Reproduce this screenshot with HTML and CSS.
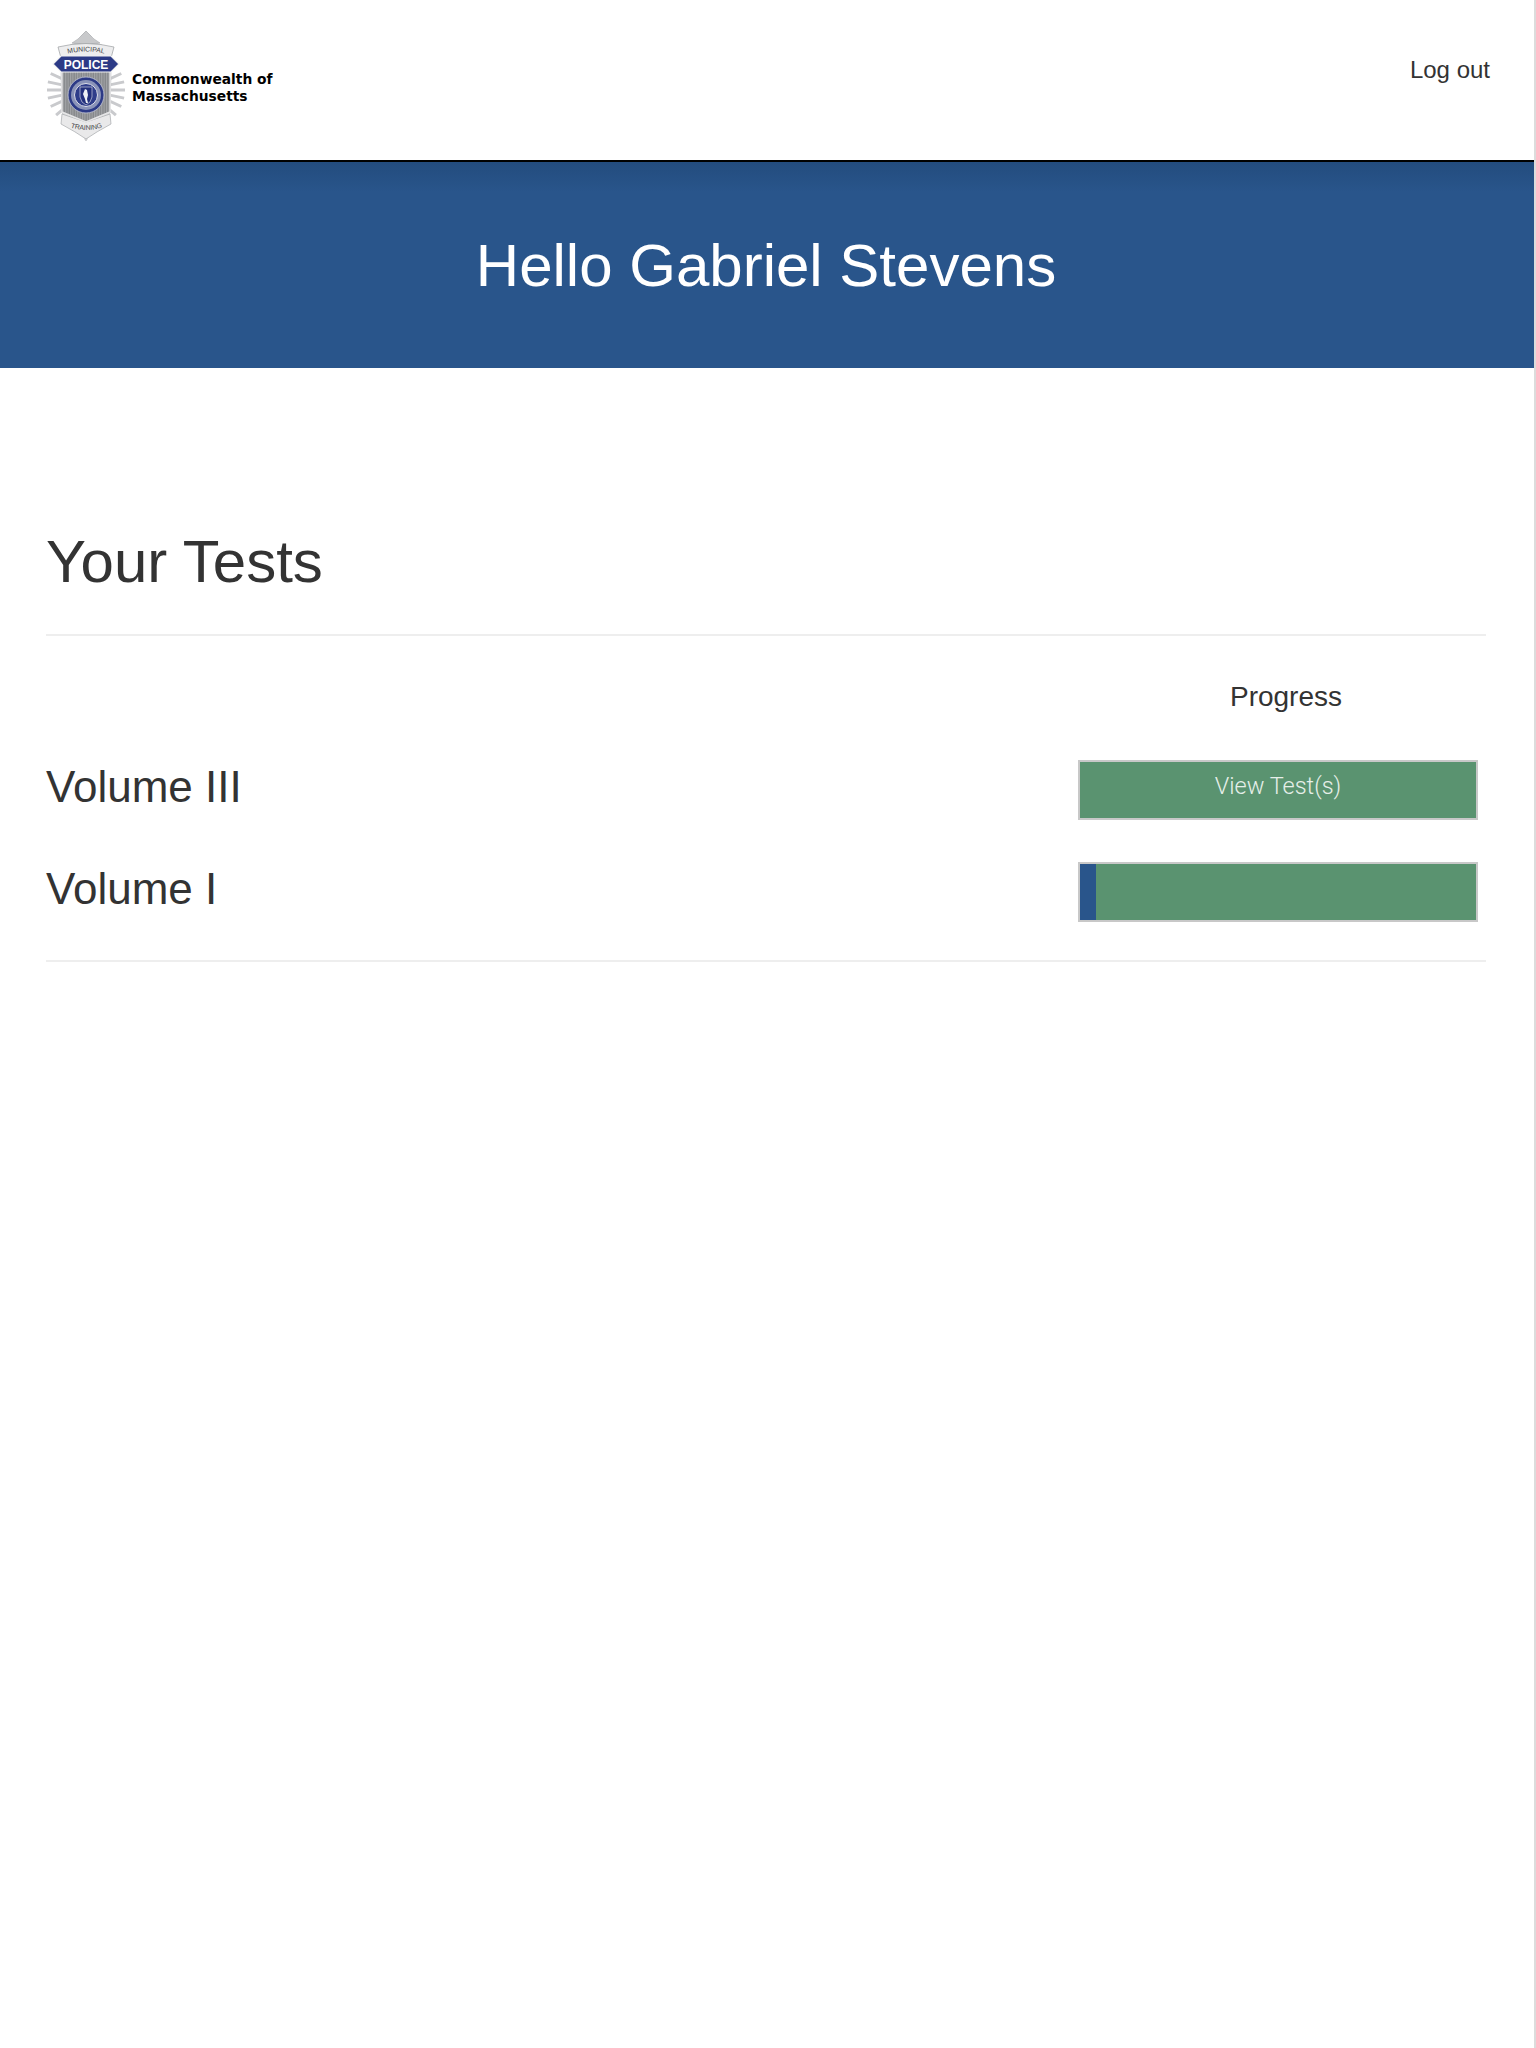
FILE: index.html
```html
<!DOCTYPE html>
<html lang="en">
<head>
  <meta charset="UTF-8" />
  <meta name="viewport" content="width=device-width, initial-scale=1.0" />
  <title>Your Tests</title>
  <link rel="stylesheet" href="styles.css">
</head>
<body>
  <header class="topbar">
    <a href="#" class="brand">
      <svg class="brand__badge" viewBox="0 0 80 114" width="80" height="114" aria-hidden="true">
        <defs>
          <pattern id="stripes" width="2.4" height="4" patternUnits="userSpaceOnUse">
            <rect width="2.4" height="4" fill="#85878a" />
            <rect width="1.1" height="4" fill="#a3a5a8" />
          </pattern>
          <path id="arcTop" d="M20 24Q40 19 60 24" />
          <path id="arcBottom" d="M21 96Q40 104 60 96" />
          <path id="rays" d="M62 60H79M61.500 55.400L78.100 51.900M61.500 64.600L78.100 68.100M59.900 50.700L75.300 43.500M59.900 69.300L75.300 76.500M56.900 45.900L69.900 34.900M56.900 74.100L69.900 85.100M52.600 78L62.400 91.900" />
        </defs>
        <g fill="none" stroke="#c9cacd" stroke-width="3">
          <use href="#rays" />
          <use href="#rays" transform="translate(80 0) scale(-1 1)" />
        </g>
        <path d="M40 1l5 5 2 6 9 3 6 12 3 16-1 40-8 10-14 6-1 11-1 1-1-1-1-11-14-6-8-10-1-40 3-16 6-12 9-3 2-6z" fill="#d8d9db" stroke="#c2c4c6" stroke-width="0.600" />
        <path d="M26 13l6-4 8-8 8 8 6 4-14 1z" fill="#c8c9cb" stroke="#a9abae" stroke-width="0.600" />
        <path d="M12 17q28-7 56 0l-3 11H15z" fill="#ededee" stroke="#9a9c9f" stroke-width="0.700" />
        <text class="brand__small"><textPath href="#arcTop" startOffset="50%" text-anchor="middle">MUNICIPAL</textPath></text>
        <path d="M16 84l24 8 24-8 1 10q-15 8-25 15-10-7-25-15z" fill="#e9e9ea" stroke="#a5a7aa" stroke-width="0.700" />
        <text class="brand__small"><textPath href="#arcBottom" startOffset="50%" text-anchor="middle">TRAINING</textPath></text>
        <path d="M16 41h48v41L40 92 16 82z" fill="url(#stripes)" stroke="#e6e6e7" stroke-width="1.400" />
        <path d="M7 34l8-8h50l8 8-8 8H15z" fill="#2c3a86" stroke="#f2f2f2" stroke-width="1.200" />
        <text class="brand__police" x="40" y="39" text-anchor="middle">POLICE</text>
        <circle cx="40" cy="65" r="18" fill="#2c3a86" stroke="#c5c8d6" stroke-width="0.800" />
        <circle cx="40" cy="65" r="15" fill="#8a93b8" />
        <circle cx="40" cy="65" r="11.500" fill="#2f3d8a" stroke="#dfe1ea" stroke-width="1" />
        <path d="M34 57h12v10q-1 6-6 8-5-2-6-8z" fill="#23307c" stroke="#e4e6ee" stroke-width="0.600" />
        <path d="M39 59l2 1 1 5-1 4 1 4h-2l-1-4-2-5z" fill="#eef0f4" />
      </svg>
      <span class="brand__name">Commonwealth of<br>Massachusetts</span>
    </a>
    <a href="#" class="topbar__link">Log out</a>
  </header>

  <section class="hero">
    <h1 class="hero__title">Hello Gabriel Stevens</h1>
  </section>

  <main class="tests">
    <h2 class="tests__title">Your Tests</h2>
    <div class="tests__list">
      <div class="tests__head">
        <span class="tests__progress">Progress</span>
      </div>
      <div class="test">
        <h3 class="test__name">Volume III</h3>
        <a href="#" class="bar bar--link">View Test(s)</a>
      </div>
      <div class="test">
        <h3 class="test__name">Volume I</h3>
        <div class="bar"><div class="bar__fill" style="width: 4%"></div></div>
      </div>
    </div>
  </main>
</body>
</html>
```

FILE: styles.css
```css
html, body {
  margin: 0;
  min-height: 100%;
}

body {
  box-sizing: border-box;
  min-height: 2048px;
  border-right: 2px solid #dcdcdc;
  font-family: 'Liberation Sans', Arial, sans-serif;
  background-color: #fff;
  color: #333;
}

.topbar {
  display: flex;
  justify-content: space-between;
  align-items: flex-start;
  box-sizing: border-box;
  height: 162px;
  padding: 30px 44px 0 46px;
  border-bottom: 2px solid #000;
}

.brand {
  display: flex;
  align-items: center;
  gap: 6px;
  text-decoration: none;
}

.brand__badge {
  display: block;
}

.brand__police {
  font: bold 12px 'Liberation Sans', sans-serif;
  fill: #fff;
}

.brand__small {
  font: 6.800px 'Liberation Sans', sans-serif;
  fill: #3f4144;
}

.brand__name {
  padding-top: 1px;
  font-family: 'DejaVu Sans', sans-serif;
  font-size: 13.800px;
  font-weight: bold;
  line-height: 17px;
  color: #000;
}

.topbar__link {
  margin-top: 26px;
  font-size: 24px;
  color: #333;
  text-decoration: none;
}

.hero {
  height: 206px;
  background: linear-gradient(#234c7e, #29558b 30px);
  text-align: center;
}

.hero__title {
  margin: 0;
  padding: 68px 2px 0 0;
  font-size: 60px;
  font-weight: normal;
  line-height: 72px;
  color: #fff;
}

.tests {
  padding: 158px 48px 0 46px;
}

.tests__title {
  margin: 0;
  font-size: 60px;
  font-weight: normal;
  line-height: 72px;
}

.tests__list {
  margin-top: 36px;
  padding: 0 8px 38px 0;
  border-top: 2px solid #eee;
  border-bottom: 2px solid #eee;
}

.tests__head {
  display: flex;
  justify-content: flex-end;
  box-sizing: border-box;
  height: 82px;
  padding-top: 45px;
}

.tests__progress {
  box-sizing: border-box;
  width: 400px;
  padding-left: 16px;
  font-size: 28px;
  text-align: center;
}

.test {
  display: flex;
  justify-content: space-between;
  margin-top: 42px;
}

.test__name {
  margin: 1px 0 0;
  font-size: 44px;
  font-weight: normal;
  line-height: 52px;
}

.bar {
  display: block;
  box-sizing: border-box;
  width: 400px;
  height: 60px;
  border: 2px solid #c8c8c8;
  background-color: #5a9370;
}

.bar--link {
  padding-top: 10px;
  font-family: Roboto, 'Liberation Sans', sans-serif;
  font-size: 23.500px;
  font-weight: 300;
  text-align: center;
  color: #e6efe9;
  text-decoration: none;
}

.bar__fill {
  height: 100%;
  background-color: #29558b;
}
```
